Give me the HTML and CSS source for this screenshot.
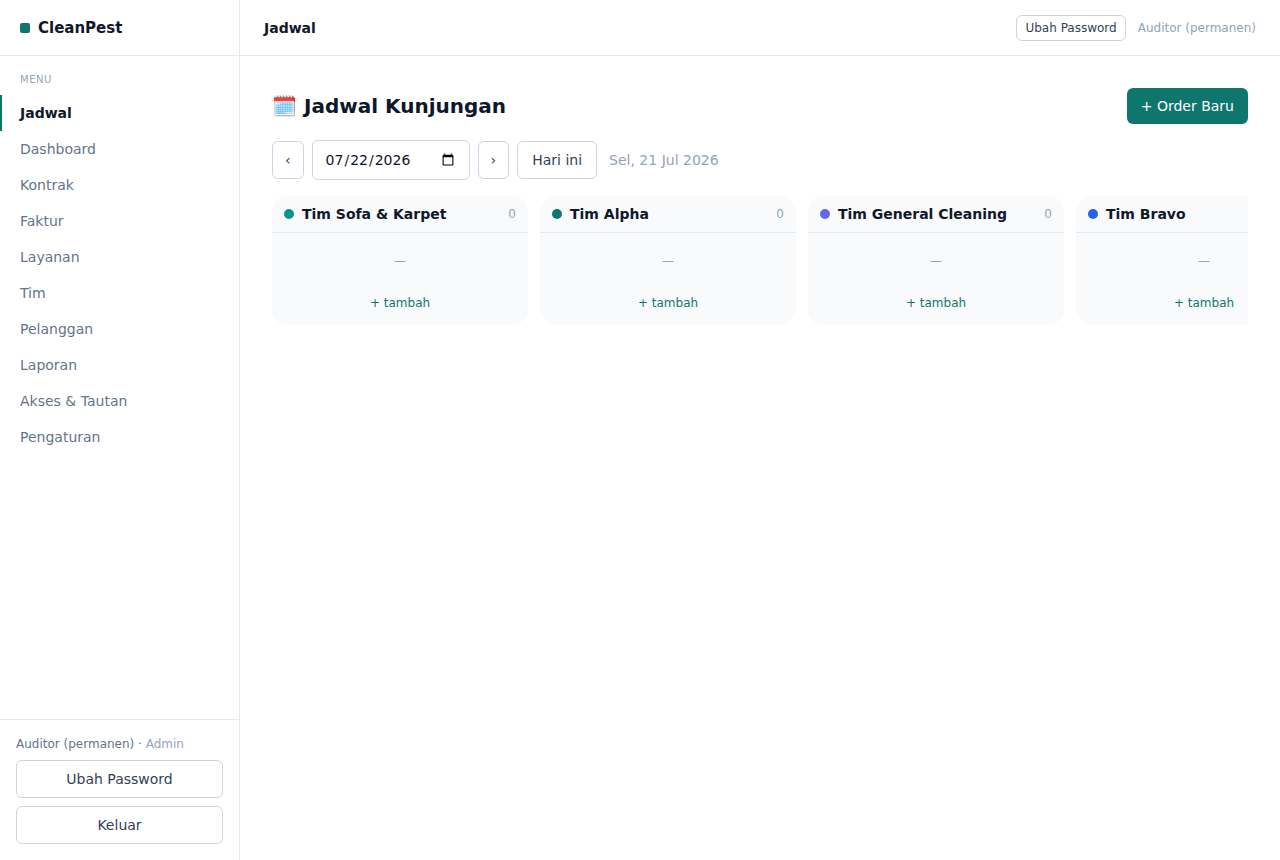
FILE: index.html
```html
<!DOCTYPE html>
<html lang="id">
<head>
<meta charset="utf-8">
<meta name="viewport" content="width=device-width, initial-scale=1">
<title>Jadwal – CleanPest</title>
<link rel="stylesheet" href="styles.css">
</head>
<body>
<div class="app">
  <aside class="sidebar">
    <div class="brand"><span class="brand-mark"></span><span>CleanPest</span></div>
    <nav class="nav" aria-label="Menu">
      <div class="nav-label">MENU</div>
      <a class="nav-link active" href="#jadwal" aria-current="page">Jadwal</a>
      <a class="nav-link" href="#dashboard">Dashboard</a>
      <a class="nav-link" href="#kontrak">Kontrak</a>
      <a class="nav-link" href="#faktur">Faktur</a>
      <a class="nav-link" href="#layanan">Layanan</a>
      <a class="nav-link" href="#tim">Tim</a>
      <a class="nav-link" href="#pelanggan">Pelanggan</a>
      <a class="nav-link" href="#laporan">Laporan</a>
      <a class="nav-link" href="#akses">Akses &amp; Tautan</a>
      <a class="nav-link" href="#pengaturan">Pengaturan</a>
    </nav>
    <div class="account">
      <div class="account-name">Auditor (permanen) · <span class="muted">Admin</span></div>
      <button class="btn" type="button">Ubah Password</button>
      <button class="btn" type="button">Keluar</button>
    </div>
  </aside>
  <div class="page">
    <header class="topbar">
      <div class="topbar-title">Jadwal</div>
      <div class="topbar-user">
        <button class="btn btn-small" type="button">Ubah Password</button>
        <span class="muted">Auditor (permanen)</span>
      </div>
    </header>
    <main class="content">
      <div class="heading">
        <h1>🗓️ Jadwal Kunjungan</h1>
        <button class="btn btn-primary" type="button">+ Order Baru</button>
      </div>
      <div class="toolbar">
        <button class="btn btn-step" type="button" aria-label="Hari sebelumnya">‹</button>
        <input class="date" type="date" value="2026-07-22" aria-label="Tanggal">
        <button class="btn btn-step" type="button" aria-label="Hari berikutnya">›</button>
        <button class="btn" type="button">Hari ini</button>
        <span class="date-text muted">Sel, 21 Jul 2026</span>
      </div>
      <div class="board">
        <section class="team">
          <header class="team-head"><span class="dot dot-teal"></span><h2>Tim Sofa &amp; Karpet</h2><span class="count">0</span></header>
          <div class="team-body"><p class="empty">—</p><button class="add" type="button">+ tambah</button></div>
        </section>
        <section class="team">
          <header class="team-head"><span class="dot dot-green"></span><h2>Tim Alpha</h2><span class="count">0</span></header>
          <div class="team-body"><p class="empty">—</p><button class="add" type="button">+ tambah</button></div>
        </section>
        <section class="team">
          <header class="team-head"><span class="dot dot-indigo"></span><h2>Tim General Cleaning</h2><span class="count">0</span></header>
          <div class="team-body"><p class="empty">—</p><button class="add" type="button">+ tambah</button></div>
        </section>
        <section class="team">
          <header class="team-head"><span class="dot dot-blue"></span><h2>Tim Bravo</h2><span class="count">0</span></header>
          <div class="team-body"><p class="empty">—</p><button class="add" type="button">+ tambah</button></div>
        </section>
      </div>
    </main>
  </div>
</div>
</body>
</html>
```
FILE: styles.css
```css
*, *::before, *::after { box-sizing: border-box; }

body {
  margin: 0;
  background: #fff;
  color: #0f172a;
  font: 14px/20px "DejaVu Sans", sans-serif;
}

h1, h2, p { margin: 0; }
button, input { font: inherit; }

.app { display: flex; min-height: 100vh; }

.sidebar {
  display: flex;
  flex-direction: column;
  flex: none;
  width: 240px;
  border-right: 1px solid #e2e8f0;
}

.brand {
  display: flex;
  align-items: center;
  gap: 8px;
  height: 56px;
  padding: 0 20px;
  border-bottom: 1px solid #e2e8f0;
  font-size: 15px;
  font-weight: 700;
}

.brand-mark {
  width: 10px;
  height: 10px;
  border-radius: 2px;
  background: #0f766e;
}

.nav { flex: 1; padding: 16px 0; }

.nav-label {
  padding: 0 20px 8px;
  color: #94a3b8;
  font-size: 10px;
  line-height: 15px;
  letter-spacing: 0.05em;
}

.nav-link {
  display: block;
  padding: 8px 18px;
  border-left: 2px solid transparent;
  color: #64748b;
  text-decoration: none;
}

.nav-link.active {
  border-left-color: #0f766e;
  color: #0f172a;
  font-weight: 700;
}

.account {
  display: flex;
  flex-direction: column;
  gap: 8px;
  padding: 16px;
  border-top: 1px solid #e2e8f0;
}

.account-name { color: #64748b; font-size: 12px; line-height: 16px; }

.muted { color: #94a3b8; }

.btn {
  padding: 8px 14px;
  border: 1px solid #cbd5e1;
  border-radius: 6px;
  background: #fff;
  color: #334155;
  cursor: pointer;
}

.btn-small { padding: 4px 8px; font-size: 12px; line-height: 16px; }
.btn-step { padding: 8px 12px; }

.btn-primary {
  border: 0;
  background: #0f766e;
  color: #fff;
}

.page { flex: 1; min-width: 0; }

.topbar {
  display: flex;
  align-items: center;
  justify-content: space-between;
  height: 56px;
  padding: 0 24px;
  border-bottom: 1px solid #e2e8f0;
}

.topbar-title { font-weight: 700; }

.topbar-user {
  display: flex;
  align-items: center;
  gap: 12px;
  font-size: 12px;
}

.content {
  display: flex;
  flex-direction: column;
  gap: 16px;
  padding: 32px;
}

.heading { display: flex; align-items: center; justify-content: space-between; }
.heading h1 { font-size: 20px; line-height: 28px; font-weight: 700; }

.toolbar { display: flex; align-items: center; gap: 8px; }

.date {
  height: 40px;
  padding: 8px 12px;
  border: 1px solid #cbd5e1;
  border-radius: 6px;
  background: #fff;
  color: #0f172a;
}

.date-text { padding-left: 4px; }

.board { display: flex; gap: 12px; overflow: hidden; }

.team {
  flex: none;
  width: 256px;
  border-radius: 16px;
  background: #f8fafc;
}

.team-head {
  display: flex;
  align-items: center;
  gap: 8px;
  padding: 8px 12px;
  border-bottom: 1px solid #e2e8f0;
}

.team-head h2 { flex: 1; font-size: 14px; line-height: 20px; font-weight: 700; }

.dot { width: 10px; height: 10px; border-radius: 50%; }
.dot-teal { background: #0d9488; }
.dot-green { background: #0f766e; }
.dot-indigo { background: #6366f1; }
.dot-blue { background: #2563eb; }

.count { color: #94a3b8; font-size: 12px; line-height: 16px; }

.team-body {
  display: flex;
  flex-direction: column;
  gap: 8px;
  padding: 8px;
  font-size: 12px;
  line-height: 16px;
  text-align: center;
}

.empty { padding: 12px 0; color: #94a3b8; }

.add {
  padding: 6px;
  border: 0;
  background: none;
  color: #0f766e;
  cursor: pointer;
}
```
